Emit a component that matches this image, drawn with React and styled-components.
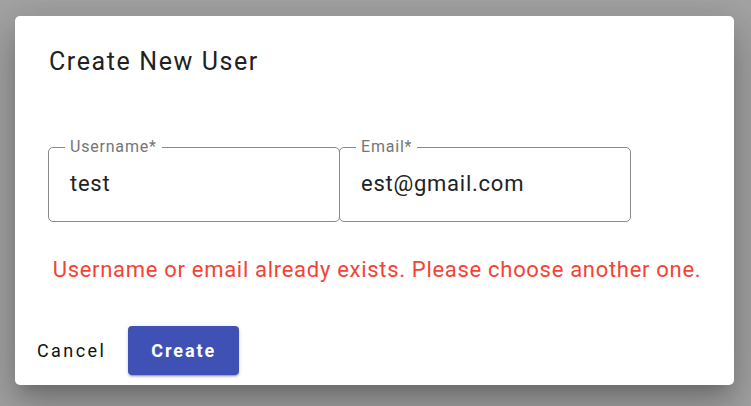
import React from "react";
import styled, { createGlobalStyle } from "styled-components";

const Global = createGlobalStyle`
  html, body { margin: 0; padding: 0; }
  body { font-family: Roboto, "Liberation Sans", sans-serif; background: #a3a3a3; }
`;

const Backdrop = styled.div`
  width: 751px;
  height: 406px;
  background: #a3a3a3;
  padding: 16px 17px 21px 15px;
  box-sizing: border-box;
`;

const Dialog = styled.div`
  width: 719px;
  height: 369px;
  background: #fff;
  border-radius: 5px;
  box-shadow: 0 11px 15px -7px rgba(0,0,0,0.2), 0 24px 38px 3px rgba(0,0,0,0.14), 0 9px 46px 8px rgba(0,0,0,0.12);
  box-sizing: border-box;
  display: flex;
  flex-direction: column;
  padding: 0 0 10px 0;
`;

const Title = styled.h2`
  margin: 0;
  padding: 30px 33px 0 34px;
  font-size: 25px;
  font-weight: 400;
  line-height: 32px;
  letter-spacing: 1.6px;
  color: #212121;
`;

const FieldRow = styled.div`
  display: flex;
  margin: 60px 0 0 33px;
`;

const Field = styled.fieldset`
  margin: 0;
  width: 292px;
  height: 84px;
  box-sizing: border-box;
  border: 1px solid #8a8a8a;
  border-radius: 5px;
  padding: 0 21px;
  & + & { margin-left: -1px; }
`;

const Legend = styled.legend`
  padding: 0 5px;
  margin-left: -5px;
  font-size: 16px;
  line-height: 18px;
  color: #757575;
  letter-spacing: 0.8px;
`;

const Value = styled.div`
  font-size: 22px;
  line-height: 28px;
  color: #222;
  margin-top: 14px;
  letter-spacing: 0.75px;
`;

const ErrorText = styled.p`
  margin: 34px 0 0 0;
  text-align: center;
  font-size: 22px;
  line-height: 28px;
  color: #f44336;
  padding-left: 5px;
  letter-spacing: 0.7px;
`;

const Actions = styled.div`
  margin-top: auto;
  display: flex;
  align-items: center;
  padding-left: 14px;
  gap: 14px;
`;

const TextButton = styled.button`
  border: none;
  background: none;
  font-family: inherit;
  font-size: 18px;
  font-weight: 400;
  letter-spacing: 2.4px;
  color: #111;
  padding: 0 8px;
  height: 49px;
  cursor: pointer;
`;

const PrimaryButton = styled.button`
  border: none;
  font-family: inherit;
  background: #3f51b5;
  color: #fff;
  font-size: 18px;
  font-weight: 700;
  letter-spacing: 1.9px;
  width: 111px;
  height: 49px;
  padding: 0;
  border-radius: 4px;
  box-shadow: 0 3px 1px -2px rgba(0,0,0,0.2), 0 2px 2px 0 rgba(0,0,0,0.14), 0 1px 5px 0 rgba(0,0,0,0.12);
  cursor: pointer;
`;

export default function App() {
  return (
    <>
      <Global />
      <Backdrop>
        <Dialog>
          <Title>Create New User</Title>
          <FieldRow>
            <Field>
              <Legend>Username*</Legend>
              <Value>test</Value>
            </Field>
            <Field>
              <Legend>Email*</Legend>
              <Value>est@gmail.com</Value>
            </Field>
          </FieldRow>
          <ErrorText>Username or email already exists. Please choose another one.</ErrorText>
          <Actions>
            <TextButton>Cancel</TextButton>
            <PrimaryButton>Create</PrimaryButton>
          </Actions>
        </Dialog>
      </Backdrop>
    </>
  );
}
